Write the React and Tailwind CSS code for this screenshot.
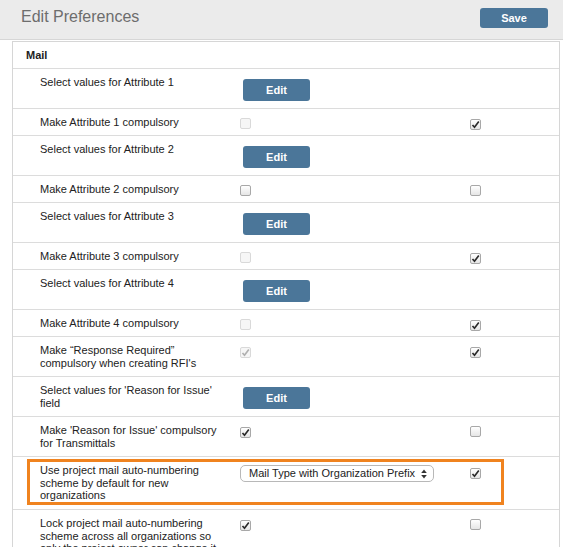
import React from "react";

const rows = [
  { type: "edit", label: "Select values for Attribute 1" },
  { type: "check", label: "Make Attribute 1 compulsory", left: { disabled: true }, right: { checked: true } },
  { type: "edit", label: "Select values for Attribute 2" },
  { type: "check", label: "Make Attribute 2 compulsory", left: {}, right: {} },
  { type: "edit", label: "Select values for Attribute 3" },
  { type: "check", label: "Make Attribute 3 compulsory", left: { disabled: true }, right: { checked: true } },
  { type: "edit", label: "Select values for Attribute 4" },
  { type: "check", label: "Make Attribute 4 compulsory", left: { disabled: true }, right: { checked: true } },
  {
    type: "check",
    tall: true,
    label: "Make \u201cResponse Required\u201d compulsory when creating RFI's",
    left: { disabled: true, checked: true },
    right: { checked: true },
  },
  { type: "edit", label: "Select values for 'Reason for Issue' field" },
  {
    type: "check",
    tall: true,
    label: "Make 'Reason for Issue' compulsory for Transmittals",
    left: { checked: true },
    right: {},
  },
];

function Checkbox({ checked, disabled }) {
  const box = disabled
    ? "border-[#d9d9d9] bg-[#f6f6f6]"
    : "border-[#a8a8a8] bg-gradient-to-b from-[#ffffff] to-[#e6e6e6]";
  return (
    <span
      className={`inline-flex w-[11px] h-[11px] items-center justify-center rounded-[2px] border ${box}`}
    >
      {checked && (
        <svg width="9" height="9" viewBox="0 0 9 9">
          <path
            d="M1.5 5 L3.5 7.2 L7.8 1.6"
            fill="none"
            stroke={disabled ? "#b0b0b0" : "#2a2a2a"}
            strokeWidth="1.7"
          />
        </svg>
      )}
    </span>
  );
}

function EditButton() {
  return (
    <button className="ml-[3px] w-[67px] h-[22px] rounded-[3px] bg-[#4b7699] text-white text-[11px] font-bold">
      Edit
    </button>
  );
}

function Row({ row }) {
  const height = row.type === "edit" || row.tall ? "h-[40px]" : "h-[27px]";
  return (
    <div className={`grid grid-cols-[200px_230px_1fr] pl-[27px] border-b border-[#dcdcdc] ${height}`}>
      <div className="pt-[7px] pr-[12px] text-[11px] leading-[12.5px] text-[#222]">{row.label}</div>
      {row.type === "edit" ? (
        <div className="pt-[8px]">
          <EditButton />
        </div>
      ) : (
        <>
          <div className="pt-[7px] leading-none">
            <Checkbox {...row.left} />
          </div>
          <div className="pt-[7px] leading-none">
            <Checkbox {...row.right} />
          </div>
        </>
      )}
    </div>
  );
}

export default function App() {
  return (
    <div className="w-[563px] h-[547px] overflow-hidden bg-white font-['Liberation_Sans',Arial,sans-serif]">
      <div className="flex items-start justify-between h-[40px] border-b border-[#d6d6d6] bg-[#ebebeb] pt-[8px] pl-[21px] pr-[15px]">
        <h1 className="text-[16px] leading-[18px] text-[#6d6d6d]">Edit Preferences</h1>
        <button className="w-[68px] h-[20px] rounded-[3px] bg-[#4b7699] text-white text-[11px] font-bold">
          Save
        </button>
      </div>

      <div className="ml-[12px] mr-[3px] mt-px border-x border-t border-[#d6d6d6]">
        <div className="flex items-center h-[27px] pl-[13px] border-b border-[#dcdcdc] text-[11px] font-bold text-[#222]">
          Mail
        </div>

        {rows.map((row, i) => (
          <Row key={i} row={row} />
        ))}

        <div className="relative grid grid-cols-[200px_230px_1fr] pl-[27px] h-[53px] border-b border-[#dcdcdc]">
          <div className="pt-[7px] pr-[12px] text-[11px] leading-[12.5px] text-[#222]">
            Use project mail auto-numbering scheme by default for new organizations
          </div>
          <div className="pt-[8px]">
            <div className="flex items-center justify-between w-[194px] h-[17px] pl-[8px] pr-[6px] rounded-[5px] border border-[#b8b8b8] bg-white text-[11px] whitespace-nowrap text-[#222]">
              <span>Mail Type with Organization Prefix</span>
              <svg width="6" height="10" viewBox="0 0 6 10">
                <path d="M3 0.5 L5.8 4 L0.2 4 Z" fill="#333" />
                <path d="M3 9.5 L5.8 6 L0.2 6 Z" fill="#333" />
              </svg>
            </div>
          </div>
          <div className="pt-[8px] leading-none">
            <Checkbox checked />
          </div>
          <div className="absolute left-[14px] top-[2px] w-[477px] h-[46px] border-[3px] border-[#f0831f]" />
        </div>

        <div className="grid grid-cols-[200px_230px_1fr] pl-[27px] h-[60px]">
          <div className="pt-[7px] pr-[12px] text-[11px] leading-[12.5px] text-[#222]">
            Lock project mail auto-numbering scheme across all organizations so only the project owner can change it
          </div>
          <div className="pt-[7px] leading-none">
            <Checkbox checked />
          </div>
          <div className="pt-[7px] leading-none">
            <Checkbox />
          </div>
        </div>
      </div>
    </div>
  );
}
